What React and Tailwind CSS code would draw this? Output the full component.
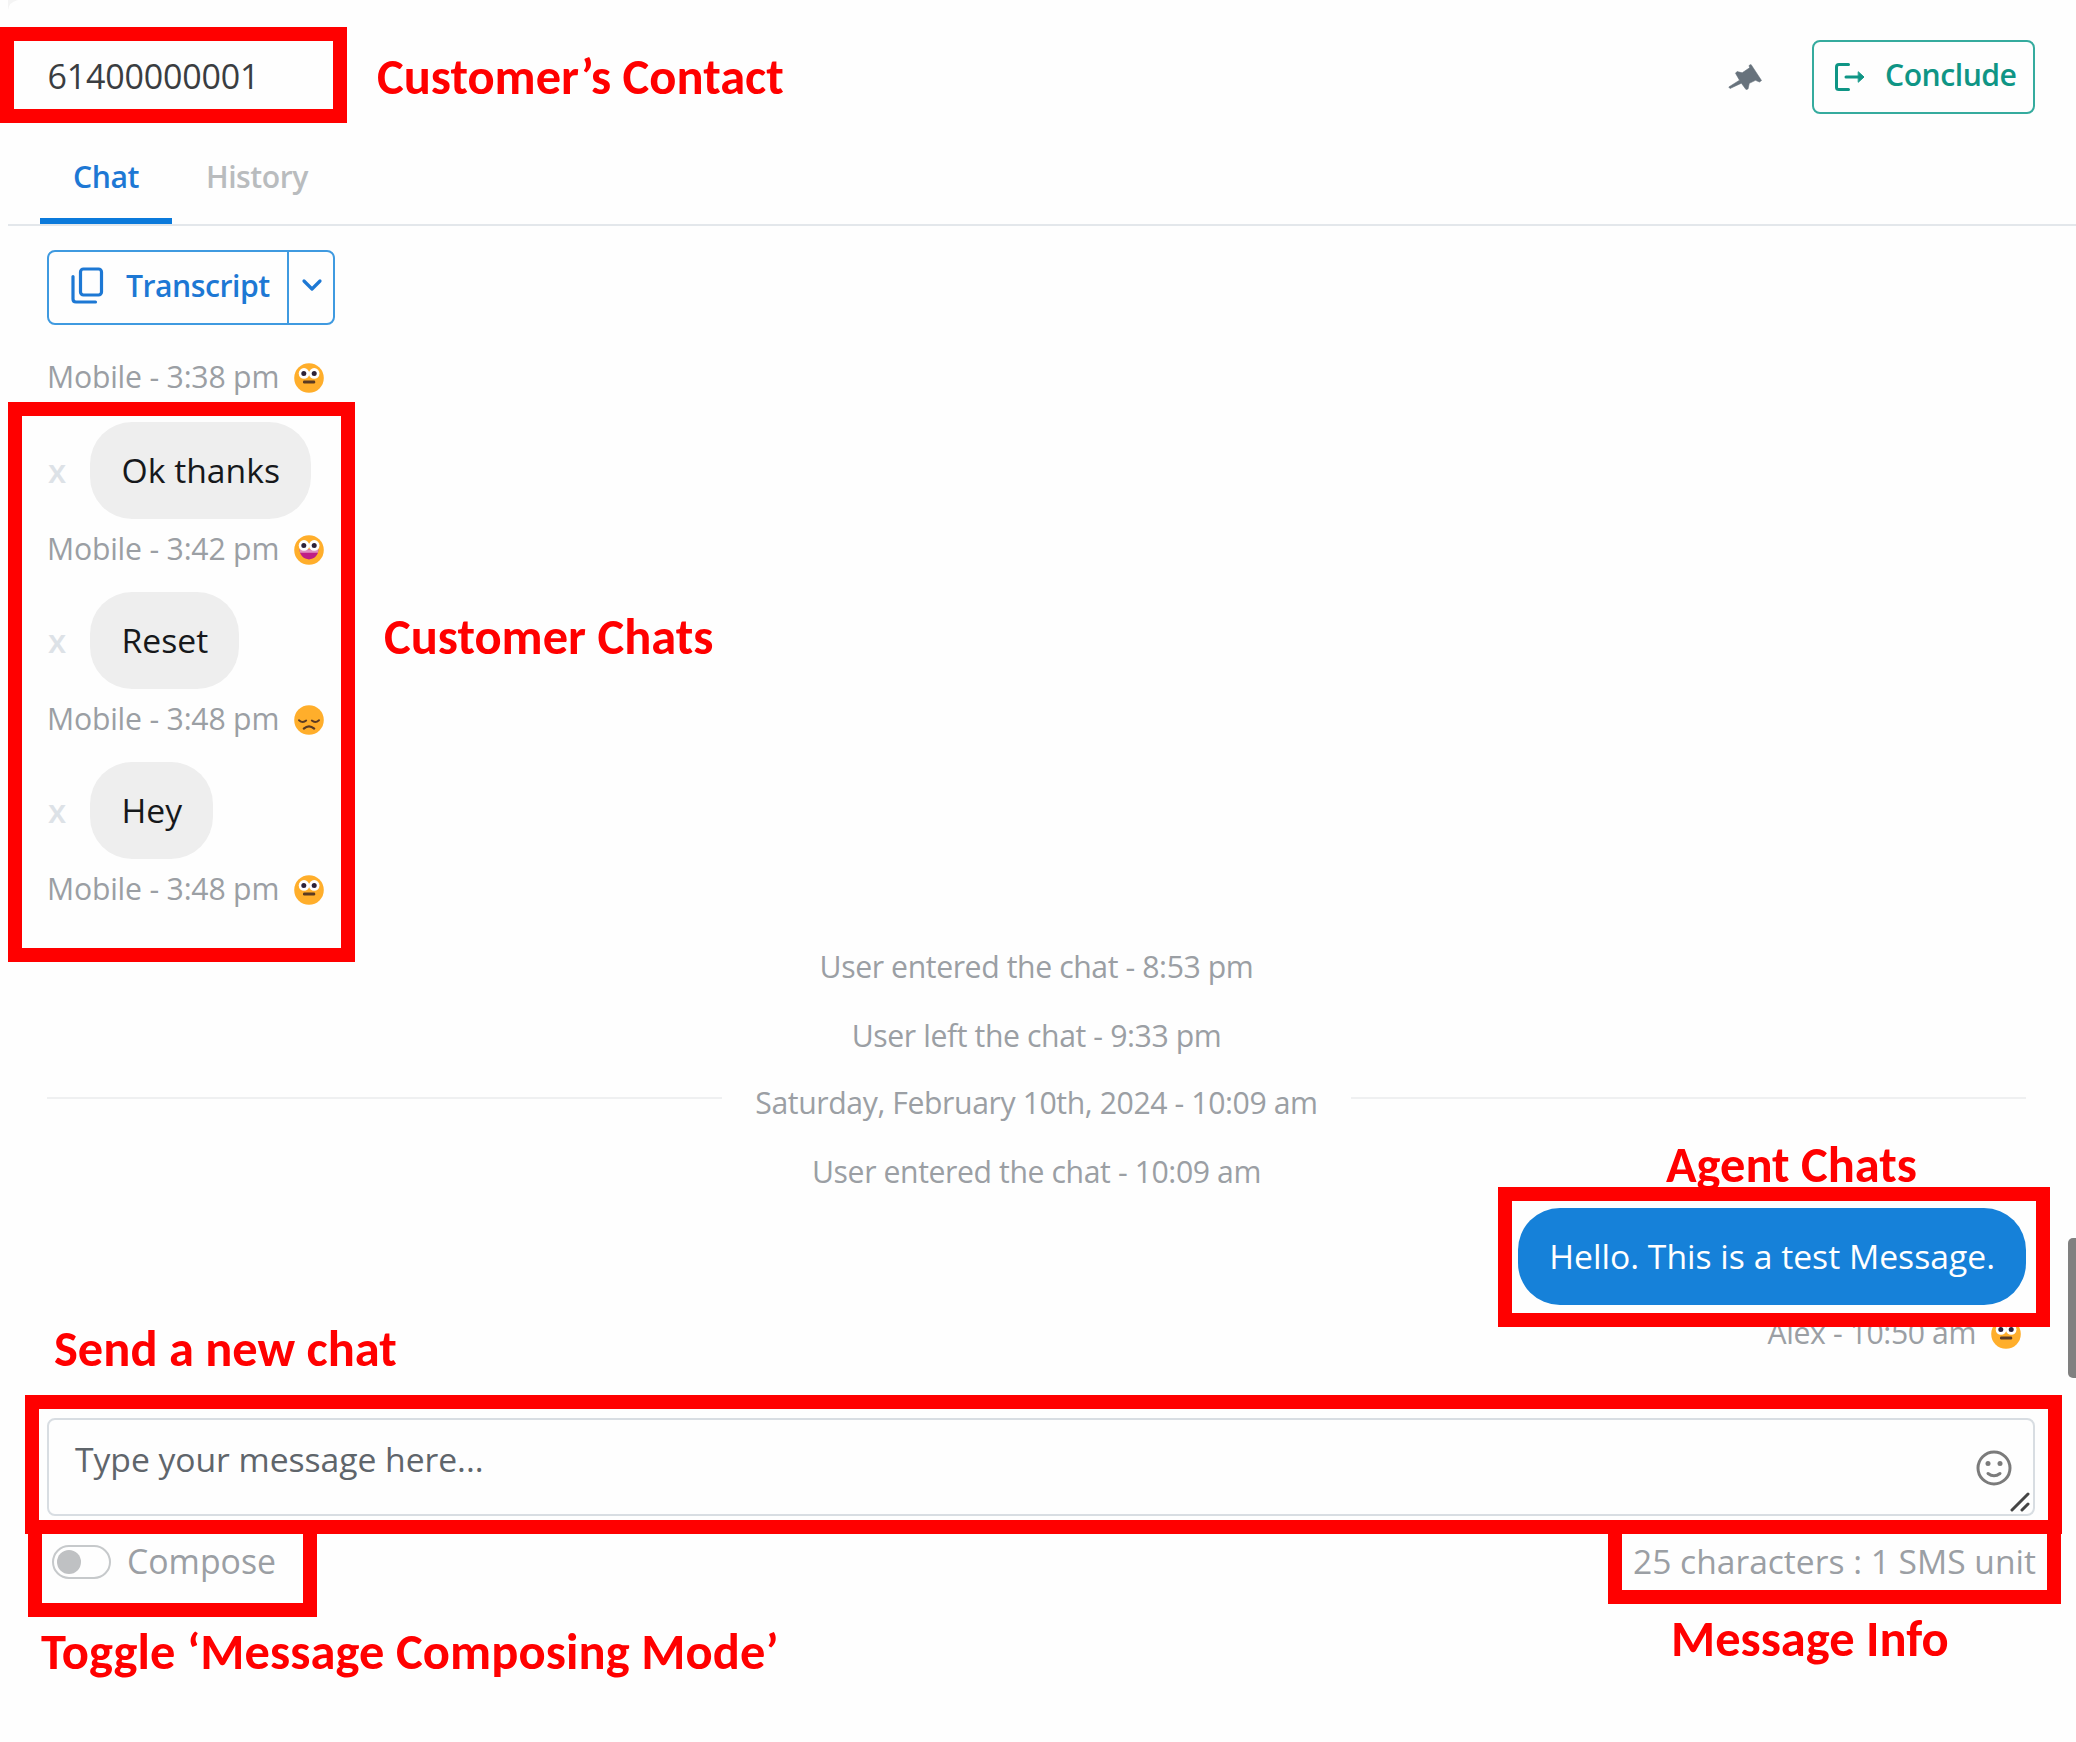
import React from "react";

function Face({ mood }) {
  return (
    <svg className="h-[30px] w-[30px] shrink-0" viewBox="0 0 30 30">
      <circle cx="15" cy="15" r="14.8" fill="#ffae2b" />
      {mood === "sad" ? (
        <g fill="none" stroke="#5a3a22" strokeWidth="1.9" strokeLinecap="round">
          <path d="M5 15.2q3.6 3.4 7.2.4" />
          <path d="M17.8 15.6q3.6 3 7.2-.4" />
          <path d="M9.8 23.6q5.2-4.6 10.4 0" strokeWidth="2.2" />
        </g>
      ) : (
        <g>
          {mood === "happy" && (
            <path d="M5.6 14.6h18.8c0 5.600-4.200 9.800-9.400 9.800s-9.400-4.200-9.400-9.800z" fill="#bf1d86" />
          )}
          {mood === "happy" && <path d="M5.600 14.600h18.800l-.5 3.100H6.100z" fill="#e08fc0" />}
          <circle cx="10" cy="10.400" r="5.300" fill="#fff" />
          <circle cx="20.200" cy="10.400" r="5.300" fill="#fff" />
          <circle cx="9.800" cy="10.400" r="2.500" fill="#2e2238" />
          <circle cx="20.200" cy="10.400" r="2.500" fill="#2e2238" />
          {mood === "neutral" && <rect x="9" y="17.600" width="12.200" height="2.900" rx="1.200" fill="#5a3a22" />}
        </g>
      )}
    </svg>
  );
}

function Meta({ text, mood, tight }) {
  return (
    <div className="flex h-[42px] items-center text-[30.2px] leading-[42px] text-[#9b9fa4]">
      <span className={"whitespace-nowrap pt-px " + (tight ? "tracking-[-0.4px]" : "tracking-[-0.2px]")}>{text}</span>
      <span className="ml-[15px] mt-[3px]">
        <Face mood={mood} />
      </span>
    </div>
  );
}

function Incoming({ text, time, mood }) {
  return (
    <div className="h-[170px]">
      <div className="flex h-[97px] items-center">
        <span className="w-[43px] pl-px text-[33px] font-semibold text-[#dde2e7]">x</span>
        <div className="flex h-[97px] items-center rounded-[42px] bg-[#eeeeee] pl-[31.5px] pr-[31px] pb-px text-[33.7px] text-[#16181b]">
          {text}
        </div>
      </div>
      <div className="mt-[8px]">
        <Meta text={"Mobile - " + time} mood={mood} />
      </div>
    </div>
  );
}

const label =
  "absolute whitespace-nowrap font-[Carlito,Calibri,Lato,sans-serif] text-[50.5px] font-bold leading-[60px] text-[#ff0000]";
const frame = "absolute border-[14px] border-[#ff0000]";

export default function App() {
  return (
    <div className="relative flex h-[1742px] w-[2076px] flex-col overflow-hidden bg-[#fefefe] font-['Open_Sans',sans-serif]">
      {/* Contact header */}
      <header className="flex h-[146px] shrink-0 items-center justify-between pl-[47.5px] pr-[41px]">
        <div className="mt-[5px] text-[34px] leading-[40px] tracking-[-0.2px] text-[#3a3d41]">61400000001</div>
        <div className="mt-[8px] flex items-center">
          <svg className="mr-[50px] h-[28px] w-[34px]" viewBox="13 13 34 28" fill="#67727c" stroke="#67727c" strokeWidth="0.6">
            <path d="M36 14.500 46.500 30.500 44.500 32 40.500 30.300 34.300 33.300 33 39 31 39.500 26.400 33.200 15 38.500 13.800 37 24.500 30.200 20.500 23.200 22 21.600 27.200 22.800 34.600 17.800 34 15.500Z" />
          </svg>
          <button className="flex h-[74px] w-[223px] items-center rounded-[8px] border-2 border-[#35ab9e] pl-[21px] text-[#0f9585]">
            <svg className="h-[28px] w-[30px]" viewBox="11 14 30 28" fill="none" stroke="currentColor" strokeWidth="3" strokeLinecap="round">
              <path d="M24.500 15.500H15Q12.500 15.500 12.500 18V38.500Q12.500 40.500 15 40.500H24.500M22 28H35" />
              <path d="M34.500 23 40 28 34.500 33Z" fill="currentColor" strokeWidth="1" />
            </svg>
            <span className="ml-[20px] mb-[5px] text-[30.200px] font-semibold leading-[40px] tracking-[-0.5px]">Conclude</span>
          </button>
        </div>
      </header>

      {/* Tabs */}
      <nav className="ml-[8px] flex h-[80px] shrink-0 border-b-2 border-[#e3e7eb] pl-[32px] text-[30.200px] font-semibold leading-[62px] tracking-[-0.5px]">
        <div className="h-[78px] w-[132px] border-b-[6px] border-[#0b7adb] text-center text-[#1d78d4]">Chat</div>
        <div className="ml-[34px] text-[#b9bcbe]">History</div>
      </nav>

      {/* Conversation */}
      <main className="flex h-[1192px] shrink-0 flex-col pl-[47px] pr-[50px] pt-[24px]">
        <div className="flex h-[75px] w-[288px] shrink-0 rounded-[8px] border-2 border-[#3f9ae0] text-[#1d78d4]">
          <div className="flex w-[240px] items-center border-r-2 border-[#3f9ae0] pl-[22px]">
            <svg className="mb-[5px] h-[37px] w-[33px]" viewBox="0 0 33 37" fill="none" stroke="currentColor" strokeWidth="3.200">
              <rect x="9.500" y="2" width="21" height="26" rx="3" />
              <path d="M2 9.500V32Q2 35 5 35H24.500" strokeLinecap="round" />
            </svg>
            <span className="ml-[22px] mb-[4px] text-[30.200px] font-semibold leading-[40px] tracking-[-0.5px]">Transcript</span>
          </div>
          <div className="flex flex-1 items-center justify-center">
            <svg className="mb-[6px] ml-px h-[14px] w-[22px]" viewBox="0 0 22 14" fill="none" stroke="currentColor" strokeWidth="3.200" strokeLinecap="round" strokeLinejoin="round">
              <path d="M3 3l8 8 8-8" />
            </svg>
          </div>
        </div>

        <div className="mt-[30px]">
          <Meta text="Mobile - 3:38 pm" mood="neutral" />
        </div>
        <div className="mt-[25px]">
          <Incoming text="Ok thanks" time="3:42 pm" mood="happy" />
          <Incoming text="Reset" time="3:48 pm" mood="sad" />
          <Incoming text="Hey" time="3:48 pm" mood="neutral" />
        </div>

        <div className="mt-[14px] text-center text-[30.200px] leading-[42px] tracking-[-0.4px] text-[#9b9fa4]">
          <div>User entered the chat - 8:53 pm</div>
          <div className="mt-[27px]">User left the chat - 9:33 pm</div>
          <div className="mt-[25px] flex items-center gap-[33px]">
            <div className="mb-[11px] h-[2px] flex-1 bg-[#eff0f1]" />
            <span>Saturday, February 10th, 2024 - 10:09 am</span>
            <div className="mb-[11px] h-[2px] flex-1 bg-[#eff0f1]" />
          </div>
          <div className="mt-[27px]">User entered the chat - 10:09 am</div>
        </div>

        <div className="mt-[15px] flex flex-col items-end">
          <div className="flex h-[97px] items-center rounded-[42px] bg-[#1681d9] pl-[31px] pr-[31px] text-[33.700px] text-white">
            Hello. This is a test Message.
          </div>
          <div className="mr-[5px] mt-[6px]">
            <Meta text="Alex - 10:50 am" mood="neutral" tight />
          </div>
        </div>
      </main>

      {/* Composer */}
      <footer className="pl-[47px] pr-[41px]">
        <div className="flex h-[98px] items-start justify-between rounded-[8px] border-2 border-[#d8dde2] pl-[26px] pr-[3px] pt-[18px]">
          <span className="pt-px text-[33.700px] leading-[40px] tracking-[-0.05px] text-[#5f656b]">Type your message here...</span>
          <div className="flex">
            <svg className="mt-[12px] h-[36px] w-[36px]" viewBox="0 0 36 36" fill="none" stroke="#7b7b7b" strokeWidth="3">
              <circle cx="18" cy="18" r="16" />
              <circle cx="12" cy="13.500" r="2.500" fill="#7b7b7b" stroke="none" />
              <circle cx="24" cy="13.500" r="2.500" fill="#7b7b7b" stroke="none" />
              <path d="M12 23.500q6 4.600 12 0" strokeLinecap="round" />
            </svg>
            <svg className="-ml-[2px] mt-[54px] h-[20px] w-[20px]" viewBox="0 0 20 20" fill="none" stroke="#454545" strokeWidth="3" strokeLinecap="round">
              <path d="M2 18 18 2M12 18 18 12" />
            </svg>
          </div>
        </div>
        <div className="mt-[22px] flex h-[46px] items-center justify-between text-[33.800px] leading-[46px] text-[#9b9fa4]">
          <div className="flex items-center">
            <div className="ml-[5px] mt-[2px] flex h-[34px] w-[59px] items-center rounded-full border-2 border-[#c6c9cb] pl-[3px]">
              <div className="h-[24px] w-[24px] rounded-full bg-[#bfc1c3]" />
            </div>
            <span className="ml-[16px]">Compose</span>
          </div>
          <span className="-mr-px text-[33.600px]">25 characters : 1 SMS unit</span>
        </div>
      </footer>

      {/* Scrollbar thumb and the page's clipped corner */}
      <div className="absolute left-[2068px] top-[1238px] h-[140px] w-[12px] rounded-[5px] bg-[#808080]" />
      <svg className="absolute left-[8px] top-0 h-[10px] w-[10px]" viewBox="0 0 10 10" fill="#f4f4f4">
        <path d="M0 0H10Q1 2 0 10Z" />
      </svg>

      {/* Annotation labels */}
      <div className={label + " left-[377px] top-[47px]"}>Customer’s Contact</div>
      <div className={label + " left-[384px] top-[607px]"}>Customer Chats</div>
      <div className={label + " left-[1666px] top-[1135px]"}>Agent Chats</div>
      <div className={label + " left-[54px] top-[1319px]"}>Send a new chat</div>
      <div className={label + " left-[41px] top-[1622px] tracking-[0.1px]"}>Toggle ‘Message Composing Mode’</div>
      <div className={label + " left-[1671px] top-[1609px]"}>Message Info</div>

      {/* Annotation frames */}
      <div className={frame + " left-0 top-[27px] h-[96px] w-[347px]"} />
      <div className={frame + " left-[8px] top-[402px] h-[560px] w-[347px]"} />
      <div className={frame + " left-[1498px] top-[1187px] h-[140px] w-[552px]"} />
      <div className={frame + " left-[28px] top-[1520px] h-[97px] w-[289px]"} />
      <div className={frame + " left-[1608px] top-[1520px] h-[84px] w-[453px]"} />
      <div className={frame + " left-[25px] top-[1395px] h-[139px] w-[2037px]"} />
    </div>
  );
}
